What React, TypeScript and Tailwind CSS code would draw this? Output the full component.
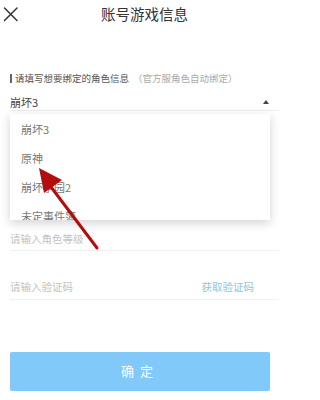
const games = ['崩坏3', '原神', '崩坏学园2', '未定事件簿'];

export default function App() {
  return (
    <div
      className="relative w-[289px] h-[400px] overflow-hidden bg-white text-[#333]"
      style={{ fontFamily: '"Noto Sans CJK SC", "Noto Sans", sans-serif' }}
    >
      {/* Header */}
      <div className="relative flex h-[28px] items-center justify-center">
        <svg className="absolute left-0 top-0" width="22" height="24" viewBox="0 0 22 24">
          <path d="M4.5 8 L17 20.5 M17 8 L4.5 20.5" stroke="#333" strokeWidth="1.5" strokeLinecap="round" />
        </svg>
        <h1 className="text-[14.5px] leading-none text-[#333]">账号游戏信息</h1>
      </div>

      <div className="px-[10px]">
        {/* Section label */}
        <div className="mt-[46px] flex items-center">
          <span className="mr-[3px] h-[9px] w-[2px] bg-[#666]" />
          <span className="text-[9.5px] leading-none text-[#555]">请填写想要绑定的角色信息</span>
          <span className="ml-[4px] text-[9.5px] leading-none text-[#aaa]">（官方服角色自动绑定）</span>
        </div>

        {/* Game select */}
        <div className="mt-[11px] flex h-[16px] items-center justify-between border-b border-[#eee]">
          <span className="text-[11px] leading-none text-[#444]">崩坏3</span>
          <svg width="8" height="6" viewBox="0 0 8 6" className="mr-[9px]">
            <path d="M4 1 L7 5 L1 5 Z" fill="#444" />
          </svg>
        </div>

        {/* Level */}
        <div className="mt-[118px] flex h-[22px] items-center border-b border-[#f0f0f0]">
          <span className="text-[10.5px] leading-none text-[#c2c2c2]">请输入角色等级</span>
        </div>

        {/* Code */}
        <div className="mt-[25px] flex h-[24px] items-center justify-between border-b border-[#f0f0f0]">
          <span className="text-[10.5px] leading-none text-[#c2c2c2]">请输入验证码</span>
          <span className="mr-[25px] text-[10.5px] leading-none text-[#8fc6d6]">获取验证码</span>
        </div>

        {/* Confirm */}
        <button className="mt-[52px] flex h-[39px] w-[260px] items-center justify-center rounded-[2px] bg-[#80c9f9] text-[13px] tracking-[6px] text-white">
          确定
        </button>
      </div>

      {/* Dropdown */}
      <div className="absolute left-[10px] top-[114px] h-[106px] w-[260px] overflow-hidden bg-white shadow-[0_3px_10px_rgba(0,0,0,0.18)]">
        <ul className="pt-[1px]">
          {games.map((g) => (
            <li key={g} className="flex h-[29px] items-center pl-[11px] text-[11px] text-[#777]">
              {g}
            </li>
          ))}
        </ul>
      </div>

      {/* Red arrow */}
      <svg className="absolute left-0 top-0" width="289" height="400" viewBox="0 0 289 400">
        <line x1="97" y1="248" x2="48" y2="183" stroke="#b30d0d" strokeWidth="3" strokeLinecap="round" />
        <path d="M39 168 L44 193 L62 180 Z" fill="#b30d0d" />
      </svg>
    </div>
  );
}
